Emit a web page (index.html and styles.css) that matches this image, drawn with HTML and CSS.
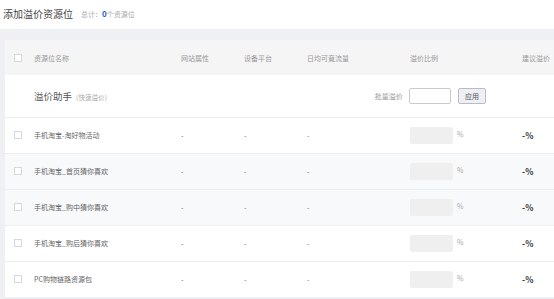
FILE: index.html
```
<!DOCTYPE html>
<html>
    <head>
        <title>添加溢价资源位</title>
        <meta http-equiv="Content-Type" content="text/html;charset=utf-8"/>
        <link rel="stylesheet" href="styles.css">
    </head>
    <body>
        <div class="top">
            <span class="title">添加溢价资源位</span>
            <span class="total">总计：<b>0</b>个资源位</span>
        </div>
        <div class="main">
            <div class="card">
                <table class="grid">
                    <colgroup>
                        <col class="c-chk"/><col class="c-name"/><col class="c-site"/><col class="c-dev"/>
                        <col class="c-flow"/><col class="c-rate"/><col class="c-sug"/>
                    </colgroup>
                    <tr class="head">
                        <td><span class="chk"></span></td>
                        <td>资源位名称</td>
                        <td>网站属性</td>
                        <td>设备平台</td>
                        <td>日均可竟流量</td>
                        <td>溢价比例</td>
                        <td>建议溢价</td>
                    </tr>
                    <tr class="helper">
                        <td></td>
                        <td colspan="3"><span class="h-name">溢价助手</span><span class="h-tip">（快速溢价）</span></td>
                        <td colspan="2" class="batch">
                            <span class="b-label">批量溢价</span>
                            <input class="b-input" type="text"/>
                            <button class="b-btn">应用</button>
                        </td>
                        <td></td>
                    </tr>
                    <tr class="row">
                        <td><span class="chk"></span></td>
                        <td>手机淘宝-淘好物活动</td>
                        <td>-</td><td>-</td><td>-</td>
                        <td><span class="rate"></span><span class="pct">%</span></td>
                        <td class="sug">-%</td>
                    </tr>
                    <tr class="row alt">
                        <td><span class="chk"></span></td>
                        <td>手机淘宝_首页猜你喜欢</td>
                        <td>-</td><td>-</td><td>-</td>
                        <td><span class="rate"></span><span class="pct">%</span></td>
                        <td class="sug">-%</td>
                    </tr>
                    <tr class="row alt">
                        <td><span class="chk"></span></td>
                        <td>手机淘宝_购中猜你喜欢</td>
                        <td>-</td><td>-</td><td>-</td>
                        <td><span class="rate"></span><span class="pct">%</span></td>
                        <td class="sug">-%</td>
                    </tr>
                    <tr class="row">
                        <td><span class="chk"></span></td>
                        <td>手机淘宝_购后猜你喜欢</td>
                        <td>-</td><td>-</td><td>-</td>
                        <td><span class="rate"></span><span class="pct">%</span></td>
                        <td class="sug">-%</td>
                    </tr>
                    <tr class="row">
                        <td><span class="chk"></span></td>
                        <td>PC购物链路资源包</td>
                        <td>-</td><td>-</td><td>-</td>
                        <td><span class="rate"></span><span class="pct">%</span></td>
                        <td class="sug">-%</td>
                    </tr>
                </table>
            </div>
        </div>
    </body>
</html>
```

FILE: styles.css
```
* { box-sizing: border-box }

body {
    background: #eef0f4;
    color: #666;
    font-family: "Noto Sans CJK SC", "Liberation Sans", sans-serif;
    margin: 0px;
    overflow: hidden;
    padding: 0px;
    width: 554px;
}

.top {
    align-items: center;
    background: #fff;
    display: flex;
    height: 29px;
    padding: 0px 0px 3px 3px;
}

.title {
    color: #444;
    font-size: 10px;
}

.total {
    color: #aaa;
    font-size: 7px;
    margin-left: 8px;
}

.total b {
    color: #1b64c8;
    font-size: 8px;
}

.main { padding: 11px 0px 0px 5px }

.card {
    background: #fff;
    overflow: hidden;
    width: 549px;
}

.grid {
    border-collapse: collapse;
    table-layout: fixed;
    width: 640px;
}

.c-chk { width: 29px }
.c-name { width: 147px }
.c-site { width: 63px }
.c-dev { width: 63px }
.c-flow { width: 103px }
.c-rate { width: 112px }
.c-sug { width: 123px }

.grid td {
    font-size: 7px;
    padding: 0px;
    white-space: nowrap;
}

.grid td:first-child { padding-left: 9px }

.chk {
    background: #fff;
    border: 1px solid #d8d8d8;
    display: block;
    height: 8px;
    width: 8px;
}

.head {
    background: #f5f5f6;
    height: 35px;
}

.head td { color: #999 }

.helper {
    border-bottom: 1px solid #eceef2;
    height: 42px;
}

.h-name {
    color: #555;
    font-size: 9.5px;
}

.h-tip {
    color: #aaa;
    font-size: 6.5px;
}

.batch {
    padding-right: 36px !important;
    text-align: right;
}

.b-label {
    color: #999;
    vertical-align: middle;
}

.b-input {
    background: #fff;
    border: 1px solid #ccc;
    border-radius: 2px;
    height: 16px;
    margin: 0px 0px 0px 5px;
    padding: 0px;
    vertical-align: middle;
    width: 42px;
}

.b-btn {
    background: #eef0f5;
    border: 1px solid #b9bcc4;
    border-radius: 2px;
    color: #555;
    font-family: "Noto Sans CJK SC", sans-serif;
    font-size: 7px;
    height: 16px;
    margin: 0px 0px 0px 5px;
    padding: 0px;
    vertical-align: middle;
    width: 28px;
}

.row {
    border-bottom: 1px solid #eceef2;
    height: 36px;
}

.row.alt { background: #f8f9fb }

.rate {
    background: #efefef;
    border-radius: 2px;
    display: inline-block;
    height: 17px;
    vertical-align: middle;
    width: 43px;
}

.pct {
    color: #aaa;
    margin-left: 4px;
    vertical-align: 0px;
}

.sug {
    color: #333;
    font-size: 8.5px !important;
    font-weight: bold;
}
```
